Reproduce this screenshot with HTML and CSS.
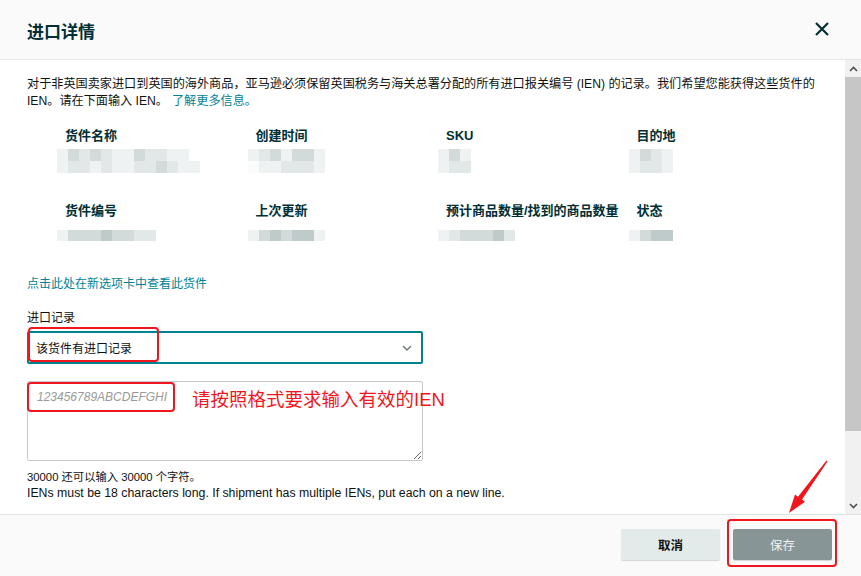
FILE: index.html
```html
<!DOCTYPE html>
<html>
    <head>
        <meta charset="utf-8">
        <link rel="stylesheet" href="styles.css">
        <title>进口详情</title>
    </head>
    <body>
        <div class="modal">
            <header class="modalHead">
                <h1 class="modalTitle">进口详情</h1>
                <button class="closeButton" title="关闭">
                    <svg width="14" height="14" viewBox="0 0 14 14"><path d="M1 1 L13 13 M13 1 L1 13" stroke="#002f36" stroke-width="2.2" fill="none"/></svg>
                </button>
            </header>

            <div class="modalBody">
                <div class="scrollContent">
                    <p class="intro"><span>对于非英国卖家进口到英国的海外商品，亚马逊必须保留英国税务与海关总署分配的所有进口报关编号 (IEN) 的记录。我们希望您能获得这些货件的</span><br><span>IEN。请在下面输入 IEN。</span><a href="#" class="link learnMore">了解更多信息。</a></p>

                    <div class="infoGrid">
                        <div class="infoCell">
                            <div class="infoLabel">货件名称</div>
                            <div class="blurValue">
                                <div class="pxRow"><span class="px s1"></span><span class="px s3"></span><span class="px s2"></span><span class="px s3"></span><span class="px s2"></span><span class="px s1"></span><span class="px s1"></span><span class="px s3"></span><span class="px s2"></span><span class="px s2"></span><span class="px s1"></span><span class="px s1"></span></div>
                                <div class="pxRow"><span class="px s1"></span><span class="px s2"></span><span class="px s2"></span><span class="px s1"></span><span class="px s2"></span><span class="px s1"></span><span class="px s1"></span><span class="px s2"></span><span class="px s2"></span><span class="px s3"></span><span class="px s2"></span><span class="px s1"></span><span class="px s1"></span></div>
                            </div>
                        </div>
                        <div class="infoCell">
                            <div class="infoLabel">创建时间</div>
                            <div class="blurValue">
                                <div class="pxRow"><span class="px s1"></span><span class="px s2"></span><span class="px s3"></span><span class="px s1"></span><span class="px s3"></span><span class="px s3"></span><span class="px s1"></span></div>
                                <div class="pxRow"><span class="px s0"></span><span class="px s1"></span><span class="px s1"></span><span class="px s2"></span><span class="px s2"></span><span class="px s2"></span><span class="px s1"></span></div>
                            </div>
                        </div>
                        <div class="infoCell">
                            <div class="infoLabel">SKU</div>
                            <div class="blurValue">
                                <div class="pxRow"><span class="px s1"></span><span class="px s3"></span><span class="px s1"></span></div>
                                <div class="pxRow"><span class="px s1"></span><span class="px s2"></span><span class="px s2"></span></div>
                            </div>
                        </div>
                        <div class="infoCell">
                            <div class="infoLabel">目的地</div>
                            <div class="blurValue">
                                <div class="pxRow"><span class="px s1"></span><span class="px s3"></span><span class="px s2"></span><span class="px s1"></span></div>
                                <div class="pxRow"><span class="px s1"></span><span class="px s2"></span><span class="px s2"></span><span class="px s1"></span></div>
                            </div>
                        </div>

                        <div class="infoCell">
                            <div class="infoLabel">货件编号</div>
                            <div class="blurValue single">
                                <div class="pxRow"><span class="px s1"></span><span class="px s3"></span><span class="px s3"></span><span class="px s3"></span><span class="px s4"></span><span class="px s3"></span><span class="px s3"></span><span class="px s2"></span><span class="px s2"></span></div>
                            </div>
                        </div>
                        <div class="infoCell">
                            <div class="infoLabel">上次更新</div>
                            <div class="blurValue single">
                                <div class="pxRow"><span class="px s1"></span><span class="px s3"></span><span class="px s4"></span><span class="px s3"></span><span class="px s4"></span><span class="px s4"></span><span class="px s1"></span></div>
                            </div>
                        </div>
                        <div class="infoCell">
                            <div class="infoLabel">预计商品数量/找到的商品数量</div>
                            <div class="blurValue single">
                                <div class="pxRow"><span class="px s1"></span><span class="px s2"></span><span class="px s3"></span><span class="px s3"></span><span class="px s3"></span><span class="px s4"></span><span class="px s2"></span></div>
                            </div>
                        </div>
                        <div class="infoCell">
                            <div class="infoLabel">状态</div>
                            <div class="blurValue single">
                                <div class="pxRow"><span class="px s1"></span><span class="px s3"></span><span class="px s4"></span><span class="px s4"></span></div>
                            </div>
                        </div>
                    </div>

                    <a href="#" class="link viewShipment">点击此处在新选项卡中查看此货件</a>

                    <div class="fieldLabel">进口记录</div>
                    <div class="selectWrap">
                        <div class="selectBox">
                            <span>该货件有进口记录</span>
                            <svg width="10" height="6" viewBox="0 0 10 6"><path d="M1 1 L5 5 L9 1" stroke="#6b7777" stroke-width="1.4" fill="none"/></svg>
                        </div>
                        <div class="markBox selectMark"></div>
                    </div>

                    <div class="textWrap">
                        <textarea class="ienInput" placeholder="123456789ABCDEFGHI"></textarea>
                        <div class="markBox inputMark"></div>
                        <span class="markText">请按照格式要求输入有效的IEN</span>
                    </div>

                    <div class="hint">
                        <div class="hintCount">30000 还可以输入 30000 个字符。</div>
                        <div class="hintRule">IENs must be 18 characters long. If shipment has multiple IENs, put each on a new line.</div>
                    </div>
                </div>

                <div class="scrollbar">
                    <span class="scrollArrow">
                        <svg width="9" height="6" viewBox="0 0 9 6"><path d="M1 5 L4.5 1.5 L8 5" stroke="#505050" stroke-width="1.6" fill="none"/></svg>
                    </span>
                    <div class="scrollTrack"><div class="scrollThumb"></div></div>
                    <span class="scrollArrow">
                        <svg width="9" height="6" viewBox="0 0 9 6"><path d="M1 1 L4.5 4.5 L8 1" stroke="#505050" stroke-width="1.6" fill="none"/></svg>
                    </span>
                </div>
            </div>

            <footer class="modalFoot">
                <button class="footButton cancelButton">取消</button>
                <div class="saveWrap">
                    <button class="footButton saveButton">保存</button>
                    <div class="markBox saveMark"></div>
                </div>
            </footer>

            <svg class="markArrow" width="861" height="576" viewBox="0 0 861 576">
                <polygon points="826.5,460.6 827.5,461.4 802,499.5 805,501.8 789,513 795,494.5 798,496.8" fill="#f0161e"/>
            </svg>
        </div>
    </body>
</html>
```

FILE: styles.css
```css
html, body {
    margin: 0;
    padding: 0;
}
body {
    background: #ffffff;
    font-family: "Liberation Sans", "Noto Sans CJK SC", sans-serif;
    font-size: 12px;
    color: #0f1111;
}
.modal {
    position: relative;
    width: 861px;
    height: 576px;
    display: flex;
    flex-direction: column;
    overflow: hidden;
}
.modalHead {
    height: 59px;
    flex: none;
    display: flex;
    align-items: center;
    justify-content: space-between;
    padding: 0 32px 0 27px;
    background: #fafafa;
    border-bottom: 1px solid #e3e6e6;
}
.modalTitle {
    margin: 0;
    font-size: 17px;
    font-weight: bold;
    color: #002f36;
    padding-top: 2px;
}
.closeButton {
    border: none;
    background: none;
    padding: 0;
    width: 14px;
    height: 14px;
    display: flex;
    margin-top: -1px;
}
.modalBody {
    height: 454px;
    flex: none;
    display: flex;
}
.scrollContent {
    flex: 1;
    overflow: hidden;
    padding: 16px 0 0 27px;
}
.intro {
    margin: 0;
    font-size: 12.15px;
    line-height: 17px;
    white-space: nowrap;
}
.link {
    color: #008296;
    text-decoration: none;
}
.learnMore {
    margin-left: 4px;
}
.infoGrid {
    display: grid;
    grid-template-columns: repeat(4, 190.5px);
    grid-auto-rows: 75px;
    margin: 16px 0 0 30px;
}
.infoLabel {
    padding-left: 8px;
    font-size: 13px;
    font-weight: bold;
    line-height: 20px;
    color: #002f36;
    white-space: nowrap;
}
.blurValue {
    margin-top: 3px;
}
.blurValue.single {
    margin-top: 9px;
}
.pxRow {
    display: flex;
}
.px {
    width: 11px;
    height: 12px;
}
.single .px {
    height: 11px;
}
.s0 { background: #fafbfb; }
.s1 { background: #eff2f2; }
.s2 { background: #e2e7e7; }
.s3 { background: #d2dada; }
.s4 { background: #bfcaca; }
.viewShipment {
    display: block;
    line-height: 17px;
}
.fieldLabel {
    margin-top: 17px;
    line-height: 17px;
}
.selectWrap {
    position: relative;
    margin-top: 4px;
    width: 396px;
}
.selectBox {
    height: 33px;
    box-sizing: border-box;
    border: 2px solid #00838f;
    border-radius: 2px;
    display: flex;
    align-items: center;
    justify-content: space-between;
    padding: 0 9px 0 7px;
    font-size: 12px;
}
.markBox {
    position: absolute;
    border: 2px solid #f0161e;
    border-radius: 4px;
    box-sizing: border-box;
}
.selectMark {
    left: 1px;
    top: -4px;
    width: 131px;
    height: 35px;
}
.textWrap {
    position: relative;
    margin-top: 17px;
    width: 396px;
    height: 80px;
}
.ienInput {
    display: block;
    width: 396px;
    height: 80px;
    box-sizing: border-box;
    margin: 0;
    border: 1px solid #c4cbcb;
    border-radius: 2px;
    padding: 8px 9px;
    font-family: "Liberation Sans", sans-serif;
    font-size: 12px;
    outline: none;
}
.ienInput::placeholder {
    color: #9a9a9a;
    font-style: italic;
}
.inputMark {
    left: 0;
    top: 1px;
    width: 148px;
    height: 30px;
}
.markText {
    position: absolute;
    left: 165px;
    top: 4px;
    font-size: 18.5px;
    color: #f0161e;
    white-space: nowrap;
}
.hint {
    margin-top: 8px;
    line-height: 16px;
}
.hintCount {
    font-size: 11.3px;
}
.hintRule {
    font-size: 12.3px;
}
.scrollbar {
    width: 16px;
    flex: none;
    background: #f1f1f1;
    display: flex;
    flex-direction: column;
}
.scrollArrow {
    height: 17px;
    display: flex;
    align-items: center;
    justify-content: center;
}
.scrollTrack {
    flex: 1;
}
.scrollThumb {
    height: 354px;
    background: #c6c6c6;
}
.modalFoot {
    flex: 1;
    display: flex;
    justify-content: flex-end;
    align-items: flex-start;
    gap: 13px;
    padding: 14px 29px 0 0;
    background: #fafafa;
    border-top: 1px solid #dfe3e3;
}
.footButton {
    width: 99px;
    height: 31px;
    border: none;
    border-radius: 2px;
    font-family: "Liberation Sans", "Noto Sans CJK SC", sans-serif;
    font-size: 12.5px;
}
.cancelButton {
    background: #e3eaea;
    color: #0f1111;
    font-weight: bold;
    box-shadow: 0 1px 1px rgba(0, 0, 0, 0.15);
}
.saveButton {
    background: #879596;
    color: #eef2f2;
    box-shadow: 0 1px 1px rgba(0, 0, 0, 0.15);
}
.saveWrap {
    position: relative;
}
.saveMark {
    left: -6px;
    top: -10px;
    width: 110px;
    height: 48px;
}
.markArrow {
    position: absolute;
    left: 0;
    top: 0;
    pointer-events: none;
}
```
